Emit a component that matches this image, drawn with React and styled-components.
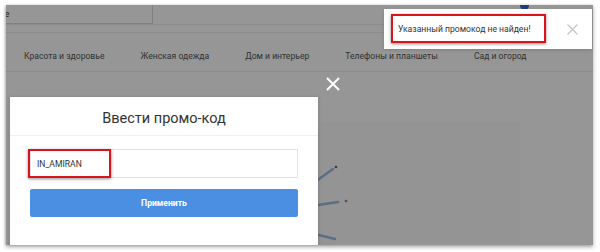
import React from "react";
import styled, { createGlobalStyle } from "styled-components";

const Global = createGlobalStyle`
  html, body { margin: 0; padding: 0; background: #fff; }
  body { font-family: Roboto, "Noto Sans", Arial, sans-serif; }
  * { box-sizing: border-box; }
`;

const Stage = styled.div`
  width: 600px;
  height: 252px;
  padding: 5px 7px 7px 6px;
  background: #fff;
`;

const Frame = styled.div`
  position: relative;
  width: 587px;
  height: 240px;
  overflow: hidden;
  background: #fff;
  box-shadow: 0 2px 4px rgba(0, 0, 0, 0.35), -1px 0 2px rgba(0, 0, 0, 0.15);
`;

const Page = styled.div`
  display: flex;
  flex-direction: column;
  height: 100%;
`;

const TopBar = styled.div`
  display: flex;
  align-items: stretch;
  height: 20px;
  border-bottom: 1px solid #ececec;
`;

const Search = styled.div`
  width: 147px;
  display: flex;
  align-items: center;
  border-right: 1px solid #dcdcdc;
  border-bottom: 1px solid #dcdcdc;
  font-size: 8.6px;
  color: #444;
  overflow: hidden;
  white-space: nowrap;
`;

const SearchText = styled.span`
  margin-left: -72px;
`;

const TopSpacer = styled.div`
  flex: 1;
  display: flex;
  justify-content: flex-end;
  padding-right: 64px;
`;

const Badge = styled.div`
  width: 9px;
  height: 9px;
  margin-top: -4px;
  border-radius: 50%;
  background: #2f6fd0;
`;

const Band = styled.div`
  height: 8px;
  border-bottom: 1px solid #ececec;
`;

const Nav = styled.nav`
  display: flex;
  align-items: center;
  gap: 36px;
  height: 39px;
  padding: 8px 0 0 18px;
  border-bottom: 1px solid #ececec;
`;

const NavItem = styled.span`
  font-size: 8.6px;
  color: #555;
  white-space: nowrap;
`;

const Content = styled.div`
  flex: 1;
  display: flex;
  padding: 50px 0 0 312px;
`;

const Panel = styled.div`
  position: relative;
  width: 202px;
  background: #fbfbfb;
`;

const Rays = styled.svg`
  position: absolute;
  left: -20px;
  top: 0;
`;

const Overlay = styled.div`
  position: absolute;
  inset: 0;
  background: rgba(0, 0, 0, 0.41);
`;

const CloseBig = styled.svg`
  position: absolute;
  left: 320px;
  top: 72px;
`;

const Modal = styled.div`
  position: absolute;
  left: 4px;
  top: 92px;
  width: 308px;
  height: 170px;
  background: #fff;
  box-shadow: 0 1px 4px rgba(0, 0, 0, 0.2);
`;

const ModalHead = styled.div`
  height: 39px;
  padding-top: 4px;
  display: flex;
  align-items: center;
  justify-content: center;
  border-bottom: 1px solid #efefef;
  font-size: 14.5px;
  color: #333;
`;

const ModalBody = styled.div`
  display: flex;
  flex-direction: column;
  gap: 11px;
  padding: 13px 20px 0 20px;
`;

const Field = styled.div`
  position: relative;
  height: 29px;
  border: 1px solid #e2e2e2;
  display: flex;
  align-items: center;
  padding-left: 6px;
  font-size: 8.6px;
  color: #333;
`;

const Highlight = styled.div`
  position: absolute;
  left: -3px;
  top: -1px;
  width: 83px;
  height: 29px;
  border: 2px solid #d9141c;
  box-shadow: 0 1px 3px rgba(0, 0, 0, 0.45);
`;

const Button = styled.div`
  height: 28px;
  border-radius: 2px;
  background: #4a8fe2;
  color: #fff;
  font-weight: 700;
  font-size: 8.6px;
  display: flex;
  align-items: center;
  justify-content: center;
`;

const Toast = styled.div`
  position: absolute;
  left: 378px;
  top: 4px;
  right: 1px;
  height: 40px;
  background: #fff;
  display: flex;
  align-items: center;
  padding-left: 7px;
  box-shadow: 0 1px 3px rgba(0, 0, 0, 0.15);
`;

const ToastMark = styled.div`
  width: 155px;
  height: 29px;
  margin-top: -1px;
  border: 2px solid #d9141c;
  box-shadow: 0 1px 3px rgba(0, 0, 0, 0.45);
  display: flex;
  align-items: center;
  padding-left: 5px;
  font-size: 8.6px;
  color: #333;
  white-space: nowrap;
`;

const ToastClose = styled.svg`
  margin-left: 21px;
`;

export default function App() {
  return (
    <>
      <Global />
      <Stage>
        <Frame>
          <Page>
            <TopBar>
              <Search>
                <SearchText>Поиск по каталоге</SearchText>
              </Search>
              <TopSpacer>
                <Badge />
              </TopSpacer>
            </TopBar>
            <Band />
            <Nav>
              <NavItem>Красота и здоровье</NavItem>
              <NavItem>Женская одежда</NavItem>
              <NavItem>Дом и интерьер</NavItem>
              <NavItem>Телефоны и планшеты</NavItem>
              <NavItem>Сад и огород</NavItem>
            </Nav>
            <Content>
              <Panel>
                <Rays width="60" height="120" viewBox="0 0 60 120">
                  <g stroke="#9bbbe0" strokeWidth="2.5" strokeLinecap="round">
                    <line x1="0" y1="72" x2="35" y2="47" />
                    <line x1="0" y1="86" x2="40" y2="80" />
                    <line x1="0" y1="108" x2="37" y2="117" />
                  </g>
                  <circle cx="38" cy="45" r="1.3" fill="#666" />
                  <circle cx="48" cy="79" r="1.3" fill="#888" />
                </Rays>
              </Panel>
            </Content>
          </Page>
          <Overlay />
          <CloseBig width="14" height="14" viewBox="0 0 14 14">
            <path d="M1 1 L13 13 M13 1 L1 13" stroke="#fff" strokeWidth="2" />
          </CloseBig>
          <Modal>
            <ModalHead>Ввести промо-код</ModalHead>
            <ModalBody>
              <Field>
                IN_AMIRAN
                <Highlight />
              </Field>
              <Button>Применить</Button>
            </ModalBody>
          </Modal>
          <Toast>
            <ToastMark>Указанный промокод не найден!</ToastMark>
            <ToastClose width="11" height="11" viewBox="0 0 11 11">
              <path d="M0.5 0.5 L10.5 10.5 M10.5 0.5 L0.5 10.5" stroke="#c4c4c4" strokeWidth="1.2" />
            </ToastClose>
          </Toast>
        </Frame>
      </Stage>
    </>
  );
}
